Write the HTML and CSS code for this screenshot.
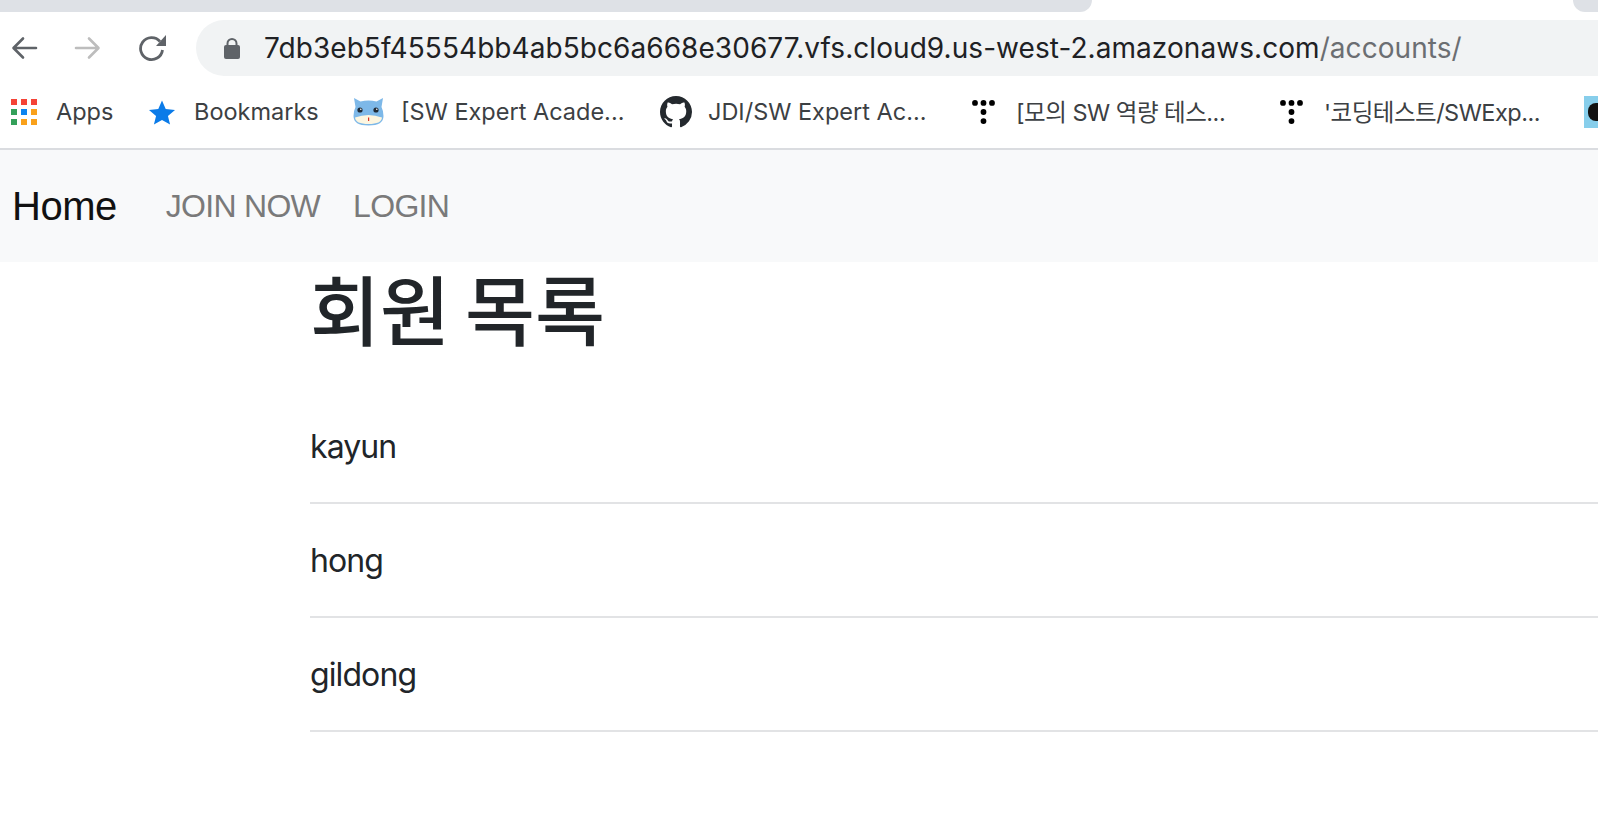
FILE: index.html
```html
<!DOCTYPE html>
<html lang="ko">
<head>
  <meta charset="UTF-8">
  <meta name="viewport" content="width=device-width, initial-scale=1.0">
  <title>회원 목록</title>
  <link rel="stylesheet" href="styles.css">
</head>
<body>
  <div class="tabstrip">
    <div class="tab-left"></div>
    <div class="tab-gap"></div>
    <div class="tab-right"></div>
  </div>

  <div class="toolbar">
    <svg class="nav-icon" viewBox="0 0 28 28"><path d="M26 14H4M13 4.500L3.500 14l9.500 9.500" fill="none" stroke="#5f6368" stroke-width="2.600" stroke-linecap="round" stroke-linejoin="round"/></svg>
    <svg class="nav-icon" viewBox="0 0 28 28"><path d="M2 14h22M15 4.500l9.500 9.500-9.500 9.500" fill="none" stroke="#bdbdbd" stroke-width="2.600" stroke-linecap="round" stroke-linejoin="round"/></svg>
    <svg class="nav-icon" viewBox="0 0 28 28"><path d="M24.500 16a11 11 0 1 1-2.500-8.500" fill="none" stroke="#5f6368" stroke-width="2.800"/><path d="M28 1V12H18z" fill="#5f6368"/></svg>
    <div class="omnibox">
      <svg class="lock" viewBox="0 0 16 21"><path d="M3.500 8V5.500a4.500 4.500 0 0 1 9 0V8" fill="none" stroke="#5f6368" stroke-width="2"/><rect y="7" width="16" height="14" rx="2" fill="#5f6368"/></svg>
      <span class="url">7db3eb5f45554bb4ab5bc6a668e30677.vfs.cloud9.us-west-2.amazonaws.com<span class="url-path">/accounts/</span></span>
    </div>
  </div>

  <div class="bookmarks">
    <div class="bookmark bm-apps">
      <svg class="apps-icon" viewBox="0 0 26 26">
        <rect x="0" y="0" width="6" height="6" fill="#f44336"/><rect x="10" y="0" width="6" height="6" fill="#f44336"/><rect x="20" y="0" width="6" height="6" fill="#f44336"/>
        <rect x="0" y="10" width="6" height="6" fill="#34a05a"/><rect x="10" y="10" width="6" height="6" fill="#0b84f0"/><rect x="20" y="10" width="6" height="6" fill="#f9a11b"/>
        <rect x="0" y="20" width="6" height="6" fill="#34a05a"/><rect x="10" y="20" width="6" height="6" fill="#f9a11b"/><rect x="20" y="20" width="6" height="6" fill="#f9a11b"/>
      </svg>
      <span>Apps</span>
    </div>
    <div class="bookmark bm-star">
      <svg class="star-icon" viewBox="0 0 28 26"><path d="M14 0l4 9.300 10 .9-7.600 6.600 2.300 9.200L14 21l-8.700 5 2.300-9.200L0 10.200l10-.9z" fill="#0b7be8"/></svg>
      <span>Bookmarks</span>
    </div>
    <div class="bookmark bm-swea">
      <svg class="cow-icon" viewBox="0 0 31 28">
        <path d="M1 0L7.500 3.500Q15.500 1.500 23.500 3.500L30 0L28.500 9Q30.500 13 30.500 18Q30.500 27.500 15.500 27.500Q.5 27.500 .5 18Q.5 13 2.500 9Z" fill="#7db8e8"/>
        <path d="M2 19.500Q15.500 14.500 29 19.500Q28.500 26 15.500 26Q2.500 26 2 19.500Z" fill="#fdf6e0"/>
        <circle cx="7" cy="12" r="2.600" fill="#1f2a36"/><circle cx="23" cy="12" r="2.600" fill="#1f2a36"/>
        <circle cx="7.800" cy="11.200" r=".8" fill="#fff"/><circle cx="23.800" cy="11.200" r=".8" fill="#fff"/>
        <rect x="15" y="19.500" width="1.200" height="3.500" fill="#d9352b"/>
      </svg>
      <span>[SW Expert Acade...</span>
    </div>
    <div class="bookmark bm-github">
      <svg class="github-icon" viewBox="0 0 16 16"><path d="M8 0C3.580 0 0 3.580 0 8c0 3.540 2.290 6.530 5.470 7.590.4.070.55-.17.55-.38 0-.19-.01-.82-.01-1.490-2.010.37-2.530-.49-2.690-.94-.09-.23-.48-.94-.82-1.130-.28-.15-.68-.52-.01-.53.63-.01 1.080.58 1.230.82.72 1.210 1.870.87 2.330.66.070-.52.28-.87.51-1.070-1.780-.2-3.640-.89-3.640-3.950 0-.87.31-1.590.82-2.150-.08-.2-.36-1.020.08-2.120 0 0 .67-.21 2.200.82.64-.18 1.320-.27 2-.27s1.360.09 2 .27c1.530-1.040 2.200-.82 2.200-.82.44 1.100.16 1.920.08 2.120.51.56.82 1.270.82 2.150 0 3.070-1.870 3.750-3.650 3.950.29.25.54.73.54 1.480 0 1.070-.01 1.930-.01 2.200 0 .21.15.46.55.38A8.013 8.013 0 0 0 16 8c0-4.420-3.580-8-8-8z" fill="#24292e"/></svg>
      <span>JDI/SW Expert Ac...</span>
    </div>
    <div class="bookmark bm-t1">
      <svg class="t-icon" viewBox="0 0 24 24"><circle cx="3" cy="2.900" r="2.900"/><circle cx="11.500" cy="2.900" r="2.900"/><circle cx="20" cy="2.900" r="2.900"/><circle cx="11.500" cy="12" r="2.900"/><circle cx="11.500" cy="21.100" r="2.900"/></svg>
      <span class="bm-cjk">[모의 SW 역량 테스...</span>
    </div>
    <div class="bookmark bm-t2">
      <svg class="t-icon" viewBox="0 0 24 24"><circle cx="3" cy="2.900" r="2.900"/><circle cx="11.500" cy="2.900" r="2.900"/><circle cx="20" cy="2.900" r="2.900"/><circle cx="11.500" cy="12" r="2.900"/><circle cx="11.500" cy="21.100" r="2.900"/></svg>
      <span class="bm-cjk">'코딩테스트/SWExp...</span>
    </div>
    <div class="last-fav"><div class="last-fav-mark"></div></div>
  </div>

  <nav class="navbar">
    <a class="navbar-brand">Home</a>
    <a class="nav-link">JOIN NOW</a>
    <a class="nav-link">LOGIN</a>
  </nav>

  <div class="container">
    <h1>회원 목록</h1>
    <ul class="member-list">
      <li>kayun</li>
      <li>hong</li>
      <li>gildong</li>
    </ul>
  </div>
</body>
</html>
```

FILE: styles.css
```css
html, body {
  margin: 0;
  height: 100%;
  overflow: hidden;
}
body {
  background: #fff;
  color: #212529;
  font-family: Inter, "Liberation Sans", "Noto Sans CJK KR", sans-serif;
  width: 1598px;
}
.tabstrip {
  display: flex;
  height: 12px;
}
.tab-left {
  width: 1092px;
  background: #dee1e6;
  border-radius: 0 0 14px 0;
}
.tab-gap {
  width: 481px;
}
.tab-right {
  flex: 1;
  background: #dee1e6;
  border-radius: 0 0 0 14px;
}
.toolbar {
  display: flex;
  align-items: center;
  height: 64px;
  box-sizing: border-box;
  padding: 8px 0 0;
}
.nav-icon {
  width: 28px;
  height: 28px;
  margin-left: 10px;
  margin-right: 36px;
  flex: none;
}
.nav-icon + .nav-icon {
  margin-left: 0;
}
.omnibox {
  flex: 1;
  height: 56px;
  margin-left: -6px;
  background: #f1f3f4;
  border-radius: 28px 0 0 28px;
  display: flex;
  align-items: center;
  padding-left: 28px;
}
.lock {
  width: 16px;
  height: 21px;
  margin-right: 24px;
}
.url {
  font-size: 28px;
  letter-spacing: 0.06px;
  color: #202124;
  white-space: nowrap;
}
.url-path {
  color: #6b6e72;
}
.bookmarks {
  display: flex;
  align-items: center;
  height: 72px;
  padding-left: 11px;
  border-bottom: 2px solid #dadce0;
  font-size: 23.5px;
  color: #3c4043;
  overflow: hidden;
  white-space: nowrap;
}
.bookmark {
  display: flex;
  align-items: center;
  flex: none;
}
.bookmark span {
  padding-bottom: 2px;
}
.bookmark .bm-cjk {
  letter-spacing: -0.5px;
}
.bm-apps { width: 138px; }
.bm-star { width: 204px; }
.bm-swea { width: 307px; }
.bm-github { width: 312px; }
.bm-t1 { width: 308px; }
.bm-t2 { width: 304px; }
.apps-icon {
  width: 26px;
  height: 26px;
  margin-right: 19px;
}
.star-icon {
  width: 26px;
  height: 25px;
  margin-right: 19px;
}
.cow-icon {
  width: 31px;
  height: 28px;
  margin-right: 17px;
}
.github-icon {
  width: 32px;
  height: 32px;
  margin-right: 16px;
}
.t-icon {
  width: 24px;
  height: 24px;
  margin-right: 20px;
}
.last-fav {
  width: 14px;
  height: 32px;
  background: #87ceeb;
  flex: none;
}
.last-fav-mark {
  width: 14px;
  height: 18px;
  margin: 7px 0 0 4px;
  background: #111;
  border-radius: 8px 0 0 8px;
}
.navbar {
  display: flex;
  align-items: center;
  height: 112px;
  background: #f8f9fa;
  padding-left: 12px;
}
.navbar-brand {
  font-family: "Liberation Sans", Arial, sans-serif;
  font-size: 40px;
  letter-spacing: -0.5px;
  color: #111;
  margin-right: 49px;
}
.nav-link {
  font-family: "Liberation Sans", Arial, sans-serif;
  font-size: 32px;
  letter-spacing: -0.7px;
  color: #7a7a7a;
  margin-right: 33px;
}
.container {
  margin-left: 310px;
}
h1 {
  margin: 0;
  padding-top: 4px;
  font-family: "Liberation Sans", "Noto Sans CJK KR", sans-serif;
  font-size: 76px;
  font-weight: 500;
  word-spacing: -6px;
  line-height: 96px;
  color: #212529;
}
.member-list {
  list-style: none;
  margin: 28px 0 0;
  padding: 0;
}
.member-list li {
  height: 114px;
  box-sizing: border-box;
  border-bottom: 2px solid #e2e3e5;
  font-size: 32px;
  letter-spacing: -0.9px;
  line-height: 114px;
}
```
